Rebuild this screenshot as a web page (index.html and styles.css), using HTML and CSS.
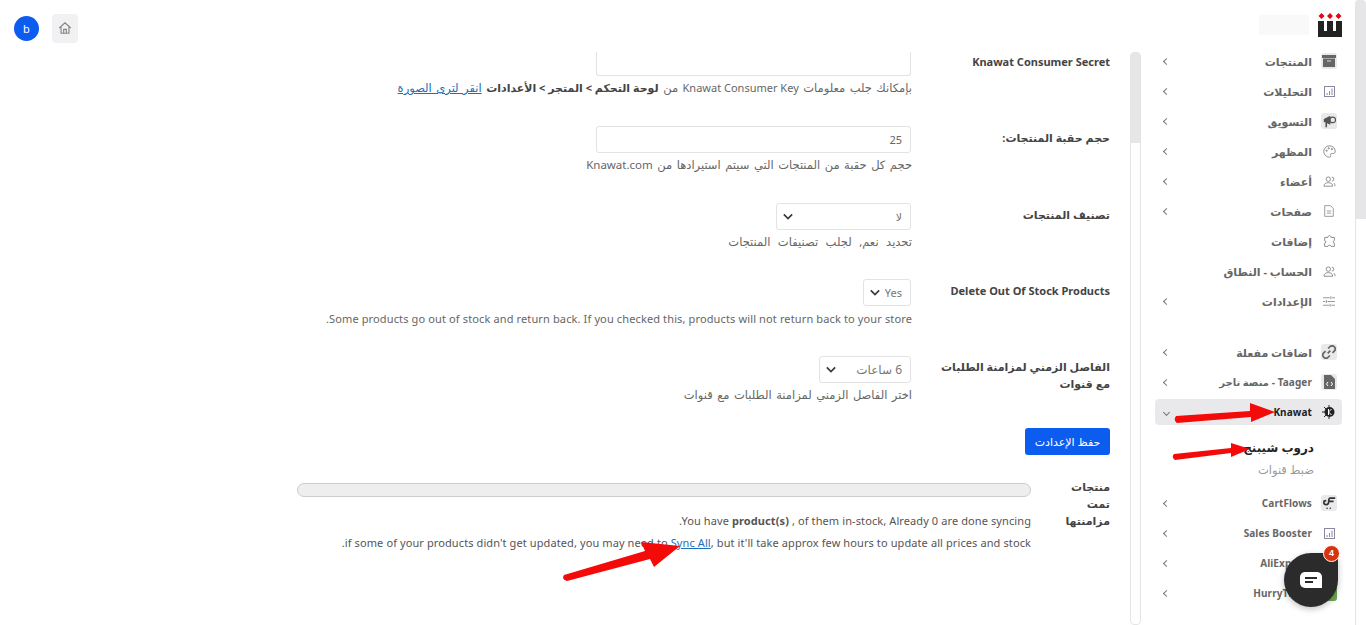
FILE: index.html
```html
<!DOCTYPE html>
<html lang="ar" dir="rtl">
<head>
  <meta charset="UTF-8">
  <meta name="viewport" content="width=device-width, initial-scale=1.0">
  <title>Knawat</title>
  <link rel="stylesheet" href="styles.css">
</head>
<body>
  <header class="topbar">
    <div class="brand">
      <svg class="logo" width="24" height="24" viewBox="0 0 24 24">
        <path fill="#e30613" d="M3.500 0l3 3-3 3-3-3zM12 0l3 3-3 3-3-3zM20.500 0l3 3-3 3-3-3z"/>
        <path fill="#222" d="M0 8h24v16H0z"/>
        <path fill="#fff" d="M6 8h3v10H6zM15 8h3v10h-3z"/>
      </svg>
      <div class="brand-blur"></div>
    </div>
    <div class="top-actions">
      <button class="home-btn">
        <svg width="14" height="14" viewBox="0 0 16 16" fill="none" stroke="#8a8078" stroke-width="1.300"><path d="M1.500 8L8 2l6.500 6M3.500 7v7h9V7M6.500 14V9.500h3V14"/></svg>
      </button>
      <div class="avatar">b</div>
    </div>
  </header>

  <div class="layout">
    <aside class="sidebar">
      <nav class="menu">
        <a class="item"><span class="ico tile"><svg width="14" height="12" viewBox="0 0 14 12"><path fill="#666" d="M0 0h14v3H0zM1 3.500h12V12H1z"/><path stroke="#ddd" d="M5 6h4"/></svg></span><span class="name">المنتجات</span><span class="chev"></span></a>
        <a class="item"><span class="ico"><svg width="11" height="11" viewBox="0 0 11 11" fill="none" stroke="#8888a0"><rect x=".5" y=".5" width="10" height="10"/><path d="M3 9V7M5.500 9V5M8 9V2.500"/></svg></span><span class="name">التحليلات</span><span class="chev"></span></a>
        <a class="item"><span class="ico tile"><svg width="13" height="13" viewBox="0 0 16 16"><path fill="#555" d="M1 5l8-4v11L5 10v5H3V9H1z"/><circle cx="12" cy="6" r="3.500" fill="none" stroke="#555" stroke-width="1.500"/></svg></span><span class="name">التسويق</span><span class="chev"></span></a>
        <a class="item"><span class="ico"><svg width="13" height="13" viewBox="0 0 16 16" fill="none" stroke="#777"><path d="M8 1a7 7 0 1 0 0 14c2 0 1.500-2 1-3 0-1.500 1.500-1.500 3-1.500 2 0 3-1 3-3C15 4 12 1 8 1z"/><circle cx="4.500" cy="7" r=".8"/><circle cx="7" cy="4" r=".8"/><circle cx="11" cy="5" r=".8"/></svg></span><span class="name">المظهر</span><span class="chev"></span></a>
        <a class="item"><span class="ico"><svg width="13" height="11" viewBox="0 0 16 14" fill="none" stroke="#777"><circle cx="6.500" cy="4" r="2.800"/><path d="M1 13c0-3 2-4.500 5.500-4.500S12 10 12 13zM11 1.500a2.500 2.500 0 0 1 0 5M13.500 9c1 1 1.500 2 1.500 4"/></svg></span><span class="name">أعضاء</span><span class="chev"></span></a>
        <a class="item"><span class="ico"><svg width="10" height="12" viewBox="0 0 14 16" fill="none" stroke="#777"><path d="M1 .5h8l4 4v11H1zM4 8h6M4 11h6"/></svg></span><span class="name">صفحات</span><span class="chev"></span></a>
        <a class="item"><span class="ico"><svg width="13" height="13" viewBox="0 0 16 16" fill="none" stroke="#777"><path d="M6 3c0-3 4-3 4 0h4v4c-2 0-2 3 0 3v4h-4c0-2-4-2-4 0H2v-4c2 0 2-3 0-3V3z"/></svg></span><span class="name">إضافات</span></a>
        <a class="item"><span class="ico"><svg width="13" height="11" viewBox="0 0 16 14" fill="none" stroke="#777"><circle cx="6.500" cy="4" r="2.800"/><path d="M1 13c0-3 2-4.500 5.500-4.500S12 10 12 13zM11 1.500a2.500 2.500 0 0 1 0 5M13.500 9c1 1 1.500 2 1.500 4"/></svg></span><span class="name">الحساب - النطاق</span></a>
        <a class="item"><span class="ico"><svg width="12" height="11" viewBox="0 0 16 14" fill="none" stroke="#777"><path d="M0 2h9M12 2h4M0 7h3M6 7h10M0 12h8M11 12h5M10.500 0v4M4.500 5v4M9.500 10v4"/></svg></span><span class="name">الإعدادات</span><span class="chev"></span></a>
      </nav>

      <nav class="menu menu-apps">
        <a class="item"><span class="ico tile"><svg width="14" height="14" viewBox="0 0 16 16" fill="none" stroke="#666" stroke-width="2"><path d="M6.500 9.500l3-3M7 4l2-2a3 3 0 0 1 5 5l-2 2M9 12l-2 2a3 3 0 0 1-5-5l2-2"/></svg></span><span class="name">اضافات مفعلة</span><span class="chev"></span></a>
        <a class="item"><span class="ico tile"><svg width="11" height="14" viewBox="0 0 11 14"><path fill="#666" d="M0 0h7l4 4v10H0z"/><path fill="none" stroke="#fff" d="M4 7L2.500 9 4 11M7 7l1.500 2L7 11"/></svg></span><span class="name name-en">Taager - منصة تاجر</span><span class="chev"></span></a>
        <a class="item active"><span class="ico"><svg width="14" height="14" viewBox="0 0 14 14"><circle cx="7.500" cy="7" r="5" fill="#222"/><path stroke="#222" d="M0 7h3M2 2l2 2M2 12l2-2M7 0v2M7 12v2"/><path stroke="#fff" fill="none" d="M6.500 4v6M9.500 4L6.500 7l3 3"/></svg></span><span class="name name-en">Knawat</span><span class="chev open"></span></a>
        <div class="submenu">
          <a class="sub current">دروب شيبنج</a>
          <a class="sub">ضبط قنوات</a>
        </div>
        <a class="item"><span class="ico tile"><svg width="13" height="14" viewBox="0 0 16 16" fill="none" stroke="#333" stroke-width="2"><path d="M15 2H9C7 2 7 4 7 6c0 3-1 4-3 4S1 9 1 7s2-2 3-2M6 6h7"/><circle cx="5" cy="14.500" r="1" fill="#333" stroke="none"/><circle cx="9" cy="14.500" r="1" fill="#333" stroke="none"/></svg></span><span class="name name-en">CartFlows</span><span class="chev"></span></a>
        <a class="item"><span class="ico"><svg width="11" height="11" viewBox="0 0 11 11" fill="none" stroke="#8888a0"><rect x=".5" y=".5" width="10" height="10"/><path d="M3 9V7M5.500 9V5M8 9V2.500"/></svg></span><span class="name name-en">Sales Booster</span><span class="chev"></span></a>
        <a class="item"><span class="ico"></span><span class="name name-en">AliExpress</span><span class="chev"></span></a>
        <a class="item"><span class="ico tile-green"></span><span class="name name-en">HurryTimer</span><span class="chev"></span></a>
      </nav>
    </aside>

    <main class="content">
      <section class="field field-cut">
        <label class="field-label">Knawat Consumer Secret</label>
        <div class="field-body">
          <input class="input input-cut" type="text">
          <p class="help ar">بإمكانك جلب معلومات <span class="en">Knawat Consumer Key</span> من <b>لوحة التحكم &gt; المتجر &gt; الأعدادات</b> <a href="#">انقر لترى الصورة</a></p>
        </div>
      </section>

      <section class="field">
        <label class="field-label">حجم حقبة المنتجات:</label>
        <div class="field-body">
          <input class="input" type="text" value="25">
          <p class="help ar">حجم كل حقبة من المنتجات التي سيتم استيرادها من Knawat.com</p>
        </div>
      </section>

      <section class="field field-short">
        <label class="field-label">تصنيف المنتجات</label>
        <div class="field-body">
          <div class="select select-cat"><span>لا</span><svg class="caret" width="10" height="7" viewBox="0 0 12 8"><path d="M1 1.500l5 5 5-5" fill="none" stroke="#343a40" stroke-width="2"/></svg></div>
          <p class="help ar help-wide">تحديد نعم, لجلب تصنيفات المنتجات</p>
        </div>
      </section>

      <section class="field">
        <label class="field-label">Delete Out Of Stock Products</label>
        <div class="field-body">
          <div class="select select-yes"><span>Yes</span><svg class="caret" width="10" height="7" viewBox="0 0 12 8"><path d="M1 1.500l5 5 5-5" fill="none" stroke="#343a40" stroke-width="2"/></svg></div>
          <p class="help help-en" dir="ltr">.Some products go out of stock and return back. If you checked this, products will not return back to your store</p>
        </div>
      </section>

      <section class="field">
        <label class="field-label field-label-long">الفاصل الزمني لمزامنة الطلبات مع قنوات</label>
        <div class="field-body">
          <div class="select select-hours"><span>6 ساعات</span><svg class="caret" width="10" height="7" viewBox="0 0 12 8"><path d="M1 1.500l5 5 5-5" fill="none" stroke="#343a40" stroke-width="2"/></svg></div>
          <p class="help ar">اختر الفاصل الزمني لمزامنة الطلبات مع قنوات</p>
        </div>
      </section>

      <button class="save-btn">حفظ الإعدادت</button>

      <section class="sync">
        <label class="field-label sync-label">منتجات تمت مزامنتها</label>
        <div class="sync-body">
          <div class="progress"></div>
          <p class="sync-text" dir="ltr">.You have <b>product(s)</b> , of them in-stock, Already 0 are done syncing</p>
          <p class="sync-text" dir="ltr">.if some of your products didn't get updated, you may need to <a href="#">Sync All</a>, but it'll take approx few hours to update all prices and stock</p>
        </div>
      </section>
    </main>
  </div>

  <!-- red arrows drawn on the screenshot -->
  <svg class="annotations" width="1366" height="625" viewBox="0 0 1366 625">
    <g fill="#f50a0a">
      <path d="M1176 416L1250 411V403L1275 412 1251 422V417L1177 423Q1173 420 1176 416Z"/>
      <path d="M1174 454L1231 448V443L1250 449 1231 457V453L1175 460Q1171 457 1174 454Z"/>
      <path d="M564 575L645 551 641 542 680 546 654 567 650 559 567 581Q561 579 564 575Z"/>
    </g>
  </svg>

  <button class="chat-bubble">
    <svg width="22" height="16" viewBox="0 0 22 16"><path fill="#fff" d="M5 0h12a5 5 0 0 1 5 5v11H5a5 5 0 0 1-5-5V5a5 5 0 0 1 5-5z"/><path stroke="#2b2b2b" stroke-width="2" d="M5 6h12M5 10h8"/></svg>
    <span class="chat-count">4</span>
  </button>
</body>
</html>
```

FILE: styles.css
```css
html, body {
  height: 100%;
}
body {
  margin: 0;
  height: 625px;
  overflow: hidden;
  background: #fff;
  color: #444;
  font-family: "Noto Sans", "DejaVu Sans", sans-serif;
  font-size: 11px;
}
.topbar {
  height: 52px;
  display: flex;
  justify-content: space-between;
  align-items: center;
  padding: 4px 24px 0 14px;
  box-sizing: border-box;
}
.brand {
  display: flex;
  align-items: center;
  gap: 9px;
  margin-top: -6px;
}
.logo {
  display: block;
}
.brand-blur {
  width: 50px;
  height: 20px;
  background: #f9f9f9;
}
.top-actions {
  display: flex;
  align-items: center;
  gap: 13px;
}
.home-btn {
  width: 26px;
  height: 29px;
  padding: 0;
  border: 0;
  border-radius: 4px;
  background: #f1f1f4;
  display: flex;
  align-items: center;
  justify-content: center;
}
.avatar {
  width: 25px;
  height: 25px;
  border-radius: 50%;
  background: #0d5cf0;
  color: #fff;
  font-size: 11px;
  line-height: 25px;
  text-align: center;
}
.layout {
  height: 573px;
  display: flex;
}

/* sidebar */
.sidebar {
  width: 225px;
  flex: none;
  box-sizing: border-box;
  margin-top: -6px;
  padding-right: 29px;
  padding-left: 14px;
}
.menu-apps {
  margin-top: 21px;
}
.item {
  display: flex;
  align-items: center;
  height: 30px;
  color: #666;
  font-size: 11px;
  font-weight: 700;
  letter-spacing: .2px;
}
.ico {
  width: 16px;
  height: 16px;
  flex: none;
  display: flex;
  align-items: center;
  justify-content: center;
  margin-left: 9px;
}
.tile {
  background: #e9e9ec;
  border-radius: 3px;
}
.tile-green {
  background: #6fa84f;
  border-radius: 3px;
}
.name {
  flex: 1;
}
.name-en {
  font-size: 10px;
  letter-spacing: .1px;
}
.chev {
  width: 5px;
  height: 5px;
  margin-left: 9px;
  box-sizing: border-box;
  border-left: 1px solid #777;
  border-bottom: 1px solid #777;
  transform: rotate(45deg);
}
.chev.open {
  margin-left: 3px;
  transform: rotate(-45deg);
}
.item.active {
  height: 26px;
  margin: 2px -5px 2px 0;
  padding: 0 5px 0 6px;
  background: #e9e9ec;
  border-radius: 4px;
  color: #222;
}
.submenu {
  padding: 10px 23px 7px 0;
}
.sub {
  display: block;
  height: 22px;
  line-height: 22px;
  color: #999;
  font-size: 11.5px;
}
.sub.current {
  color: #222;
  font-size: 12px;
  font-weight: 700;
}

/* form */
.content {
  flex: 1;
  position: relative;
  overflow: hidden;
  padding: 0 31px 0 200px;
  box-sizing: border-box;
}
.field {
  display: flex;
  height: 77px;
  padding-top: 16px;
  box-sizing: border-box;
}
.field-cut {
  height: 58px;
  padding-top: 0;
}
.field-short {
  height: 76px;
}
.field-label {
  width: 170px;
  flex: none;
  margin-left: 28px;
  padding-top: 2px;
  color: #444;
  font-size: 11px;
  font-weight: 700;
  line-height: 19px;
}
.field-cut .field-label {
  padding-top: 0;
}
.field-label-long {
  line-height: 17px;
}
.field-body {
  flex: 1;
  display: flex;
  flex-direction: column;
  align-items: flex-start;
}
.input {
  width: 315px;
  height: 27px;
  flex: none;
  margin-right: 1px;
  box-sizing: border-box;
  padding: 0 8px;
  border: 1px solid #e3e3e6;
  border-radius: 3px;
  color: #666;
  font: 11px "Noto Sans", "DejaVu Sans", sans-serif;
  direction: rtl;
}
.input-cut {
  height: 24px;
  border-top: 0;
  border-radius: 0 0 3px 3px;
}
.select {
  height: 27px;
  flex: none;
  margin-right: 1px;
  box-sizing: border-box;
  display: flex;
  align-items: center;
  justify-content: space-between;
  padding: 0 8px 0 6px;
  border: 1px solid #e3e3e6;
  border-radius: 3px;
  color: #777;
}
.select-cat {
  width: 135px;
}
.select-yes {
  width: 48px;
}
.select-hours {
  width: 92px;
  font-size: 12px;
}
.caret {
  display: block;
}
.help {
  margin: 4px 0 0;
  color: #666;
  font-size: 11px;
  line-height: 16px;
  white-space: nowrap;
}
.help.ar {
  font-size: 11.5px;
  word-spacing: 1.5px;
}
.help.help-wide {
  word-spacing: 4.5px;
}
.help .en {
  font-size: 11px;
  word-spacing: 0;
}
.help-en {
  margin-top: 5px;
  letter-spacing: .13px;
}
.help b {
  color: #444;
  font-size: 11px;
  word-spacing: 0;
}
.help a, .sync-text a {
  color: #1d6fb8;
}
.save-btn {
  display: block;
  width: 85px;
  height: 27px;
  margin-top: 11px;
  padding: 0;
  border: 0;
  border-radius: 3px;
  background: #0d5cf0;
  color: #fff;
  font: 11px "Noto Sans", "DejaVu Sans", sans-serif;
}
.sync {
  display: flex;
  margin-top: 23px;
}
.sync-label {
  width: 50px;
  margin-left: 29px;
  padding-top: 0;
  line-height: 17px;
}
.sync-body {
  flex: 1;
  padding-top: 5px;
}
.progress {
  width: 734px;
  height: 14px;
  box-sizing: border-box;
  border: 1px solid #ccc;
  border-radius: 7px;
  background: #eee;
  margin-bottom: 16px;
}
.sync-text {
  margin: 0 0 7px;
  color: #555;
  font-size: 11px;
  line-height: 15px;
  letter-spacing: .1px;
  text-align: right;
  white-space: nowrap;
}

/* scrollbars, drawn as plain tracks on top of the panels */
.content::before {
  content: '';
  position: absolute;
  top: 0;
  right: 0;
  width: 11px;
  height: 573px;
  box-sizing: border-box;
  border: 1px solid #e5e5e8;
  border-radius: 4px;
  background: linear-gradient(#e6e6e9 90px, #fff 90px);
}
body::after {
  content: '';
  position: fixed;
  top: 0;
  right: 0;
  width: 11px;
  height: 625px;
  box-sizing: border-box;
  border-left: 1px solid #e5e5e8;
  background: linear-gradient(#e6e6e9 219px, #fff 219px);
  border-radius: 4px 4px 0 0;
}

/* overlays */
.annotations {
  position: fixed;
  top: 0;
  left: 0;
  pointer-events: none;
}
.chat-bubble {
  position: fixed;
  left: 1284px;
  top: 553px;
  width: 54px;
  height: 54px;
  padding: 0;
  border: 0;
  border-radius: 50%;
  border-top-right-radius: 8px;
  background: #2b2b2b;
  box-shadow: 0 2px 6px rgba(0, 0, 0, .25);
  display: flex;
  align-items: center;
  justify-content: center;
}
.chat-count {
  position: absolute;
  top: -8px;
  right: -2px;
  width: 15px;
  height: 15px;
  border: 1px solid #fff;
  border-radius: 50%;
  background: #d8330f;
  color: #fff;
  font-size: 9px;
  font-weight: 700;
  line-height: 15px;
  text-align: center;
}
```
